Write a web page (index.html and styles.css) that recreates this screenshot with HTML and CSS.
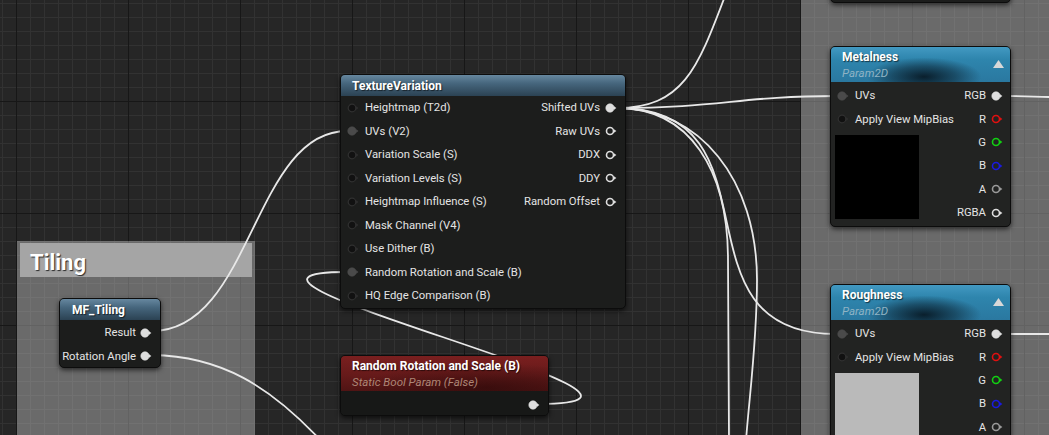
FILE: index.html
```html
<!DOCTYPE html>
<html>
<head>
<meta charset="utf-8">
<title>Material Graph</title>
<link rel="stylesheet" href="styles.css">
</head>
<body>
<div class="graph">
  <div class="comment c-tiling"><div class="comment-hdr">Tiling</div></div>
  <div class="comment c-right"></div>

  <svg class="wires" width="1049" height="435" viewBox="0 0 1049 435">
    <path d="M152,331 C252,331 253,131 347,131"/>
    <path d="M152,355 C220,356 270,385 325,445"/>
    <path d="M538,404 C740,404 153,272 347,272"/>
    <path d="M617,108 C720,108 740,96 836,96"/>
    <path d="M617,108 C690,108 700,60 735,-30"/>
    <path d="M617,108 C787,108 666,334 836,334"/>
    <path d="M617,108 C690,108 728,170 728,260 L729,440"/>
    <path d="M617,108 C700,108 757,180 757,280 C757,340 750,390 746,440"/>
    <path d="M1003,96 C1030,96 1035,97 1049,97"/>
    <path d="M1003,334 L1049,334"/>
  </svg>

  <div class="node n-top"></div>

  <!-- TextureVariation -->
  <div class="node n-tv">
    <div class="hdr hdr-fn"><span class="title">TextureVariation</span></div>
    <div class="body two">
      <div class="col">
        <div class="row in"><svg class="pin dim" viewBox="0 0 12 10"><circle cx="5" cy="5" r="3.8"/><path d="M9.2 3.2 L11.4 5 L9.2 6.8Z"/></svg><span>Heightmap (T2d)</span></div>
        <div class="row in"><svg class="pin link" viewBox="0 0 12 10"><circle cx="5" cy="5" r="4.3"/><path d="M9.2 3.2 L11.4 5 L9.2 6.8Z"/></svg><span>UVs (V2)</span></div>
        <div class="row in"><svg class="pin dim" viewBox="0 0 12 10"><circle cx="5" cy="5" r="3.8"/><path d="M9.2 3.2 L11.4 5 L9.2 6.8Z"/></svg><span>Variation Scale (S)</span></div>
        <div class="row in"><svg class="pin dim" viewBox="0 0 12 10"><circle cx="5" cy="5" r="3.8"/><path d="M9.2 3.2 L11.4 5 L9.2 6.8Z"/></svg><span>Variation Levels (S)</span></div>
        <div class="row in"><svg class="pin dim" viewBox="0 0 12 10"><circle cx="5" cy="5" r="3.8"/><path d="M9.2 3.2 L11.4 5 L9.2 6.8Z"/></svg><span>Heightmap Influence (S)</span></div>
        <div class="row in"><svg class="pin dim" viewBox="0 0 12 10"><circle cx="5" cy="5" r="3.8"/><path d="M9.2 3.2 L11.4 5 L9.2 6.8Z"/></svg><span>Mask Channel (V4)</span></div>
        <div class="row in"><svg class="pin dim" viewBox="0 0 12 10"><circle cx="5" cy="5" r="3.8"/><path d="M9.2 3.2 L11.4 5 L9.2 6.8Z"/></svg><span>Use Dither (B)</span></div>
        <div class="row in"><svg class="pin link" viewBox="0 0 12 10"><circle cx="5" cy="5" r="4.3"/><path d="M9.2 3.2 L11.4 5 L9.2 6.8Z"/></svg><span>Random Rotation and Scale (B)</span></div>
        <div class="row in"><svg class="pin dim" viewBox="0 0 12 10"><circle cx="5" cy="5" r="3.8"/><path d="M9.2 3.2 L11.4 5 L9.2 6.8Z"/></svg><span>HQ Edge Comparison (B)</span></div>
      </div>
      <div class="col">
        <div class="row out"><span>Shifted UVs</span><svg class="pin on" viewBox="0 0 12 10"><circle cx="5" cy="5" r="4.2"/><path d="M9 3.2 L11.4 5 L9 6.8Z"/></svg></div>
        <div class="row out"><span>Raw UVs</span><svg class="pin" viewBox="0 0 12 10"><circle cx="5" cy="5" r="3.5"/><path d="M9 3.2 L11.4 5 L9 6.8Z"/></svg></div>
        <div class="row out"><span>DDX</span><svg class="pin" viewBox="0 0 12 10"><circle cx="5" cy="5" r="3.5"/><path d="M9 3.2 L11.4 5 L9 6.8Z"/></svg></div>
        <div class="row out"><span>DDY</span><svg class="pin" viewBox="0 0 12 10"><circle cx="5" cy="5" r="3.5"/><path d="M9 3.2 L11.4 5 L9 6.8Z"/></svg></div>
        <div class="row out"><span>Random Offset</span><svg class="pin" viewBox="0 0 12 10"><circle cx="5" cy="5" r="3.5"/><path d="M9 3.2 L11.4 5 L9 6.8Z"/></svg></div>
      </div>
    </div>
  </div>

  <!-- MF_Tiling -->
  <div class="node n-mf">
    <div class="hdr hdr-fn"><span class="title">MF_Tiling</span></div>
    <div class="body one">
      <div class="row out tight"><span>Result</span><svg class="pin on" viewBox="0 0 12 10"><circle cx="5" cy="5" r="4.2"/><path d="M9 3.2 L11.4 5 L9 6.8Z"/></svg></div>
      <div class="row out tight"><span>Rotation Angle</span><svg class="pin on" viewBox="0 0 12 10"><circle cx="5" cy="5" r="4.2"/><path d="M9 3.2 L11.4 5 L9 6.8Z"/></svg></div>
    </div>
  </div>

  <!-- Static bool param -->
  <div class="node n-bool">
    <div class="hdr hdr-bool">
      <div class="titles">
        <span class="title">Random Rotation and Scale (B)</span>
        <span class="sub sub-bool">Static Bool Param (False)</span>
      </div>
    </div>
    <div class="body bool-body">
      <svg class="pin on" viewBox="0 0 12 10"><circle cx="5" cy="5" r="4.2"/><path d="M9 3.2 L11.4 5 L9 6.8Z"/></svg>
    </div>
  </div>

  <!-- Metalness -->
  <div class="node n-param n-metal">
    <div class="hdr hdr-param">
      <div class="titles">
        <span class="title">Metalness</span>
        <span class="sub sub-param">Param2D</span>
      </div>
      <svg class="collapse" viewBox="0 0 11 8"><path d="M0 8 L5.5 0 L11 8Z"/></svg>
    </div>
    <div class="body two param-body">
      <div class="col">
        <div class="row in"><svg class="pin link" viewBox="0 0 12 10"><circle cx="5" cy="5" r="4.3"/><path d="M9.2 3.2 L11.4 5 L9.2 6.8Z"/></svg><span>UVs</span></div>
        <div class="row in"><svg class="pin dim" viewBox="0 0 12 10"><circle cx="5" cy="5" r="3.8"/><path d="M9.2 3.2 L11.4 5 L9.2 6.8Z"/></svg><span>Apply View MipBias</span></div>
        <div class="preview preview-black"></div>
      </div>
      <div class="col">
        <div class="row out"><span>RGB</span><svg class="pin on" viewBox="0 0 12 10"><circle cx="5" cy="5" r="4.2"/><path d="M9 3.2 L11.4 5 L9 6.8Z"/></svg></div>
        <div class="row out"><span>R</span><svg class="pin red" viewBox="0 0 12 10"><circle cx="5" cy="5" r="3.5"/><path d="M9 3.2 L11.4 5 L9 6.8Z"/></svg></div>
        <div class="row out"><span>G</span><svg class="pin green" viewBox="0 0 12 10"><circle cx="5" cy="5" r="3.5"/><path d="M9 3.2 L11.4 5 L9 6.8Z"/></svg></div>
        <div class="row out"><span>B</span><svg class="pin blue" viewBox="0 0 12 10"><circle cx="5" cy="5" r="3.5"/><path d="M9 3.2 L11.4 5 L9 6.8Z"/></svg></div>
        <div class="row out"><span>A</span><svg class="pin grey" viewBox="0 0 12 10"><circle cx="5" cy="5" r="3.5"/><path d="M9 3.2 L11.4 5 L9 6.8Z"/></svg></div>
        <div class="row out"><span>RGBA</span><svg class="pin" viewBox="0 0 12 10"><circle cx="5" cy="5" r="3.5"/><path d="M9 3.2 L11.4 5 L9 6.8Z"/></svg></div>
      </div>
    </div>
  </div>

  <!-- Roughness -->
  <div class="node n-param n-rough">
    <div class="hdr hdr-param">
      <div class="titles">
        <span class="title">Roughness</span>
        <span class="sub sub-param">Param2D</span>
      </div>
      <svg class="collapse" viewBox="0 0 11 8"><path d="M0 8 L5.5 0 L11 8Z"/></svg>
    </div>
    <div class="body two param-body">
      <div class="col">
        <div class="row in"><svg class="pin link" viewBox="0 0 12 10"><circle cx="5" cy="5" r="4.3"/><path d="M9.2 3.2 L11.4 5 L9.2 6.8Z"/></svg><span>UVs</span></div>
        <div class="row in"><svg class="pin dim" viewBox="0 0 12 10"><circle cx="5" cy="5" r="3.8"/><path d="M9.2 3.2 L11.4 5 L9.2 6.8Z"/></svg><span>Apply View MipBias</span></div>
        <div class="preview preview-grey"></div>
      </div>
      <div class="col">
        <div class="row out"><span>RGB</span><svg class="pin on" viewBox="0 0 12 10"><circle cx="5" cy="5" r="4.2"/><path d="M9 3.2 L11.4 5 L9 6.8Z"/></svg></div>
        <div class="row out"><span>R</span><svg class="pin red" viewBox="0 0 12 10"><circle cx="5" cy="5" r="3.5"/><path d="M9 3.2 L11.4 5 L9 6.8Z"/></svg></div>
        <div class="row out"><span>G</span><svg class="pin green" viewBox="0 0 12 10"><circle cx="5" cy="5" r="3.5"/><path d="M9 3.2 L11.4 5 L9 6.8Z"/></svg></div>
        <div class="row out"><span>B</span><svg class="pin blue" viewBox="0 0 12 10"><circle cx="5" cy="5" r="3.5"/><path d="M9 3.2 L11.4 5 L9 6.8Z"/></svg></div>
        <div class="row out"><span>A</span><svg class="pin grey" viewBox="0 0 12 10"><circle cx="5" cy="5" r="3.5"/><path d="M9 3.2 L11.4 5 L9 6.8Z"/></svg></div>
        <div class="row out"><span>RGBA</span><svg class="pin" viewBox="0 0 12 10"><circle cx="5" cy="5" r="3.5"/><path d="M9 3.2 L11.4 5 L9 6.8Z"/></svg></div>
      </div>
    </div>
  </div>
</div>
</body>
</html>
```

FILE: styles.css
```css
html, body {
  margin: 0;
  padding: 0;
  background: #262626;
  overflow: hidden;
}

.graph {
  position: relative;
  width: 1049px;
  height: 435px;
  overflow: hidden;
  font-family: Roboto, "Noto Sans", "Liberation Sans", sans-serif;
  background-color: #262626;
  background-image:
    linear-gradient(to right, #171717 0, #171717 1px, transparent 1px),
    linear-gradient(to bottom, #171717 0, #171717 1px, transparent 1px),
    linear-gradient(to right, #323232 0, #323232 1px, transparent 1px),
    linear-gradient(to bottom, #323232 0, #323232 1px, transparent 1px);
  background-size: 112px 112px, 112px 112px, 14px 14px, 14px 14px;
  background-position: 16px 0, 0 101px, 2px 0, 0 3px;
}

/* comment boxes */
.comment {
  position: absolute;
  background: rgba(190, 190, 190, 0.45);
  z-index: 0;
}
.c-tiling {
  left: 17px;
  top: 241px;
  width: 238px;
  height: 220px;
  padding: 2px 3px 0 3px;
  box-sizing: border-box;
}
.c-right {
  left: 801px;
  top: 0;
  width: 260px;
  height: 435px;
}
.comment-hdr {
  height: 34px;
  box-sizing: border-box;
  background: #a5a5a5;
  color: #ffffff;
  font-weight: 700;
  font-size: 22px;
  line-height: 34px;
  padding-left: 10px;
  padding-top: 3px;
  text-shadow: 1px 1px 1px rgba(0, 0, 0, 0.75);
}

/* wires */
.wires {
  position: absolute;
  left: 0;
  top: 0;
  z-index: 1;
}
.wires path {
  fill: none;
  stroke: #e8e8e8;
  stroke-width: 1.8;
}

/* nodes */
.node {
  position: absolute;
  z-index: 2;
  background: #1c1d1c;
  border: 1px solid #0c0c0c;
  border-radius: 5px;
  box-shadow: 0 2px 5px rgba(0, 0, 0, 0.65);
  overflow: hidden;
  color: #e4e4e4;
  font-size: 11.3px;
  box-sizing: border-box;
}
.n-top {
  left: 830px;
  top: -40px;
  width: 181px;
  height: 43px;
}
.n-tv { left: 340px; top: 74px; width: 286px; height: 235px; }
.n-mf { left: 59px; top: 298px; width: 102px; height: 70px; }
.n-bool { left: 340px; top: 355px; width: 209px; height: 61px; }
.n-metal { left: 830px; top: 46px; width: 181px; height: 181px; }
.n-rough { left: 830px; top: 284px; width: 181px; height: 200px; }

.n-param { background: #222322; }

.hdr {
  display: flex;
  align-items: center;
  justify-content: space-between;
  box-sizing: border-box;
  padding-left: 11px;
}
.title {
  font-weight: 700;
  font-size: 12px;
  color: #ffffff;
  text-shadow: 1px 1px 1px rgba(0, 0, 0, 0.6);
  white-space: nowrap;
}
.hdr-fn {
  height: 21px;
  background: linear-gradient(180deg, #66879f 0%, #46667d 40%, #2b4253 100%);
}
.n-mf .hdr-fn { height: 21px; padding-left: 12px; }

.titles {
  display: flex;
  flex-direction: column;
  line-height: 16px;
}
.sub {
  font-style: italic;
  font-size: 11.5px;
}
.sub-bool { color: #ad8676; }
.sub-param { color: #8fb3c4; }

.hdr-bool {
  height: 35px;
  background:
    radial-gradient(ellipse 60% 70% at 70% 90%, rgba(40, 8, 8, 0.6) 0%, rgba(40, 8, 8, 0) 100%),
    linear-gradient(180deg, #7a1f1f 0%, #661a1a 55%, #501414 100%);
  padding-top: 1px;
}
.hdr-param {
  height: 35px;
  padding-right: 6px;
  padding-top: 1px;
  background:
    radial-gradient(ellipse 32% 55% at 52% 85%, rgba(8, 26, 38, 0.95) 0%, rgba(12, 38, 54, 0.55) 55%, rgba(12, 38, 54, 0) 100%),
    linear-gradient(180deg, #4299c2 0%, #2e85ad 35%, #2a78a0 100%);
}
.collapse {
  width: 11px;
  height: 8px;
  fill: #d8d8d8;
  margin-top: -3px;
}

/* body */
.body { box-sizing: border-box; }
.two {
  display: flex;
  justify-content: space-between;
}
.col {
  display: flex;
  flex-direction: column;
}
.row {
  height: 23.5px;
  display: flex;
  align-items: center;
  white-space: nowrap;
}
.row.in {
  padding-left: 6px;
  gap: 6px;
}
.row.out {
  justify-content: flex-end;
  padding-right: 7px;
  gap: 5px;
}
.n-tv .row.out { padding-right: 8px; }
.one {
  display: flex;
  flex-direction: column;
  padding-top: 1px;
}
.row.tight { gap: 4px; padding-right: 8px; }

.param-body { padding-top: 2px; }
.param-body .row { height: 23.4px; }
.preview {
  width: 84px;
  height: 84px;
  margin: 4px 0 0 4px;
}
.preview-black { background: #000000; }
.preview-grey { background: #bababa; }

.bool-body {
  height: 25px;
  display: flex;
  align-items: center;
  justify-content: flex-end;
  padding-right: 8px;
  padding-top: 2px;
  background: #171817;
}

/* pins */
.pin {
  width: 12px;
  height: 10px;
  flex: none;
  color: #dedede;
  overflow: visible;
}
.pin circle {
  fill: none;
  stroke: currentColor;
  stroke-width: 1.6;
}
.pin path { fill: currentColor; }
.pin.on circle { fill: currentColor; stroke-width: 0.6; }
.pin.dim { color: #303030; }
.pin.dim circle { fill: #111111; stroke-width: 1.2; }
.pin.link { color: #4a4a4a; }
.pin.link circle { fill: currentColor; stroke-width: 0.5; }
.pin.red { color: #e01010; }
.pin.green { color: #12d012; }
.pin.blue { color: #1a1ae0; }
.pin.grey { color: #9a9a9a; }
```
